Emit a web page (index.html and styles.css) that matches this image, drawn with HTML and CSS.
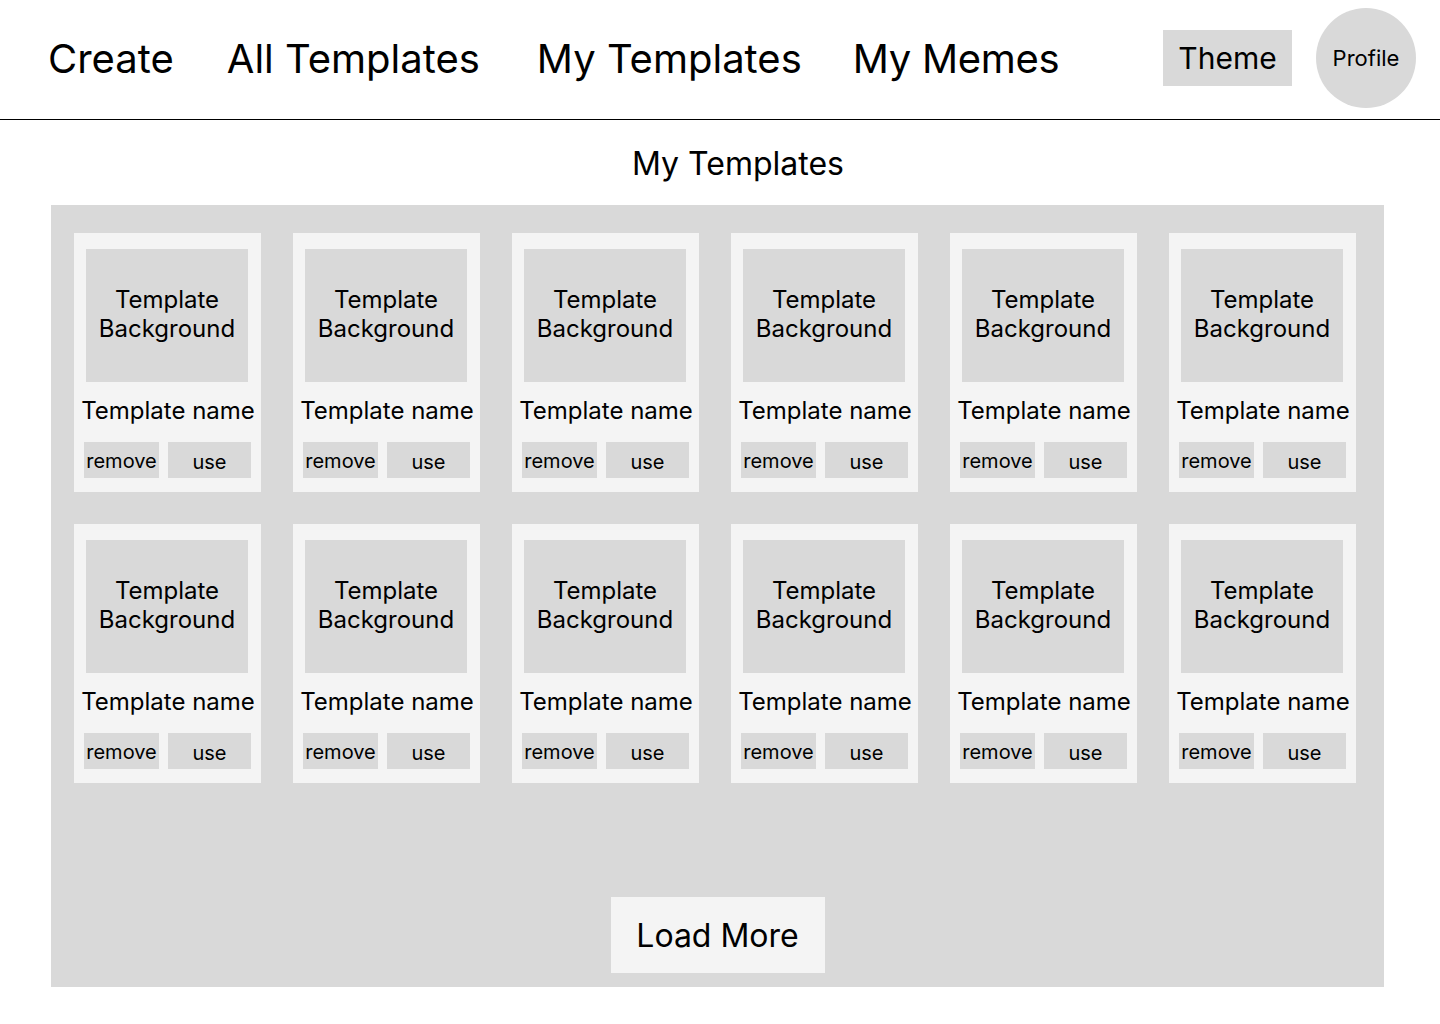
FILE: index.html
```html
<!DOCTYPE html>
<html lang="en">
<head>
  <meta charset="UTF-8">
  <meta name="viewport" content="width=device-width, initial-scale=1.0">
  <title>My Templates</title>
  <link rel="stylesheet" href="styles.css">
</head>
<body>
  <div class="header">
    <div class="nav">
      <a class="nav-link" href="#">Create</a>
      <a class="nav-link" href="#">All Templates</a>
      <a class="nav-link nav-mine" href="#">My Templates</a>
      <a class="nav-link nav-memes" href="#">My Memes</a>
    </div>
    <div class="header-right">
      <button class="theme-button">Theme</button>
      <button class="profile-button">Profile</button>
    </div>
  </div>

  <h2 class="page-title">My Templates</h2>

  <div class="templates-panel">
    <div class="templates-grid">
      <div class="template-card">
        <div class="template-bg">Template<br>Background</div>
        <div class="template-name">Template name</div>
        <div class="card-buttons"><button class="remove-button">remove</button><button class="use-button">use</button></div>
      </div>
      <div class="template-card">
        <div class="template-bg">Template<br>Background</div>
        <div class="template-name">Template name</div>
        <div class="card-buttons"><button class="remove-button">remove</button><button class="use-button">use</button></div>
      </div>
      <div class="template-card">
        <div class="template-bg">Template<br>Background</div>
        <div class="template-name">Template name</div>
        <div class="card-buttons"><button class="remove-button">remove</button><button class="use-button">use</button></div>
      </div>
      <div class="template-card">
        <div class="template-bg">Template<br>Background</div>
        <div class="template-name">Template name</div>
        <div class="card-buttons"><button class="remove-button">remove</button><button class="use-button">use</button></div>
      </div>
      <div class="template-card">
        <div class="template-bg">Template<br>Background</div>
        <div class="template-name">Template name</div>
        <div class="card-buttons"><button class="remove-button">remove</button><button class="use-button">use</button></div>
      </div>
      <div class="template-card">
        <div class="template-bg">Template<br>Background</div>
        <div class="template-name">Template name</div>
        <div class="card-buttons"><button class="remove-button">remove</button><button class="use-button">use</button></div>
      </div>
      <div class="template-card">
        <div class="template-bg">Template<br>Background</div>
        <div class="template-name">Template name</div>
        <div class="card-buttons"><button class="remove-button">remove</button><button class="use-button">use</button></div>
      </div>
      <div class="template-card">
        <div class="template-bg">Template<br>Background</div>
        <div class="template-name">Template name</div>
        <div class="card-buttons"><button class="remove-button">remove</button><button class="use-button">use</button></div>
      </div>
      <div class="template-card">
        <div class="template-bg">Template<br>Background</div>
        <div class="template-name">Template name</div>
        <div class="card-buttons"><button class="remove-button">remove</button><button class="use-button">use</button></div>
      </div>
      <div class="template-card">
        <div class="template-bg">Template<br>Background</div>
        <div class="template-name">Template name</div>
        <div class="card-buttons"><button class="remove-button">remove</button><button class="use-button">use</button></div>
      </div>
      <div class="template-card">
        <div class="template-bg">Template<br>Background</div>
        <div class="template-name">Template name</div>
        <div class="card-buttons"><button class="remove-button">remove</button><button class="use-button">use</button></div>
      </div>
      <div class="template-card">
        <div class="template-bg">Template<br>Background</div>
        <div class="template-name">Template name</div>
        <div class="card-buttons"><button class="remove-button">remove</button><button class="use-button">use</button></div>
      </div>
    </div>
    <div class="load-more-row">
      <button class="load-more">Load More</button>
    </div>
  </div>
</body>
</html>
```

FILE: styles.css
```css
body {
  margin: 0;
  font-family: Inter, "Open Sans", sans-serif;
  color: black;
  background: white;
}

button {
  font-family: inherit;
  color: black;
  border: none;
  padding: 0;
  cursor: pointer;
}

.header {
  display: flex;
  align-items: center;
  justify-content: space-between;
  border-bottom: 1px solid black;
  padding: 0 24px 4px 48px;
  box-sizing: border-box;
  height: 120px;
}

.nav {
  display: flex;
  gap: 53px;
  padding-top: 2px;
}

.nav-link {
  font-size: 40px;
  color: black;
  text-decoration: none;
}

.nav-mine {
  margin-left: 4px;
}

.nav-memes {
  margin-left: -2px;
  letter-spacing: -0.3px;
}

.header-right {
  display: flex;
  align-items: center;
  gap: 24px;
}

.theme-button {
  background: #d9d9d9;
  width: 129px;
  height: 56px;
  font-size: 30px;
}

.profile-button {
  background: #d9d9d9;
  width: 100px;
  height: 100px;
  border-radius: 50%;
  font-size: 22px;
}

.page-title {
  font-size: 32px;
  font-weight: 400;
  text-align: center;
  margin: 23px 0 0;
  padding-left: 36px;
  line-height: 42px;
}

.templates-panel {
  background: #d9d9d9;
  margin: 20px 56px 0 51px;
  padding: 28px 28px 14px 23px;
}

.templates-grid {
  display: grid;
  grid-template-columns: repeat(6, 187px);
  gap: 32px;
}

.template-card {
  background: #f4f4f4;
  height: 259px;
  padding: 16px 13px 0 12px;
  box-sizing: border-box;
}

.template-bg {
  background: #d9d9d9;
  height: 133px;
  display: flex;
  align-items: center;
  justify-content: center;
  text-align: center;
  font-size: 24px;
  line-height: 29px;
  padding-bottom: 4px;
  box-sizing: border-box;
}

.template-name {
  font-size: 24px;
  text-align: center;
  margin-top: 15px;
  line-height: 28px;
  white-space: nowrap;
  margin-left: -8px;
  margin-right: -10px;
}

.card-buttons {
  display: flex;
  gap: 9px;
  margin-top: 17px;
  margin-left: -2px;
}

.remove-button {
  background: #d9d9d9;
  width: 75px;
  height: 36px;
  font-size: 20px;
  padding-top: 1px;
  flex-shrink: 0;
}

.use-button {
  background: #d9d9d9;
  width: 83px;
  height: 36px;
  font-size: 20px;
  padding-top: 3px;
  flex-shrink: 0;
}

.load-more-row {
  display: flex;
  justify-content: center;
  margin-top: 114px;
  padding-left: 5px;
}

.load-more {
  background: #f4f4f4;
  width: 214px;
  height: 76px;
  font-size: 32px;
}
```
